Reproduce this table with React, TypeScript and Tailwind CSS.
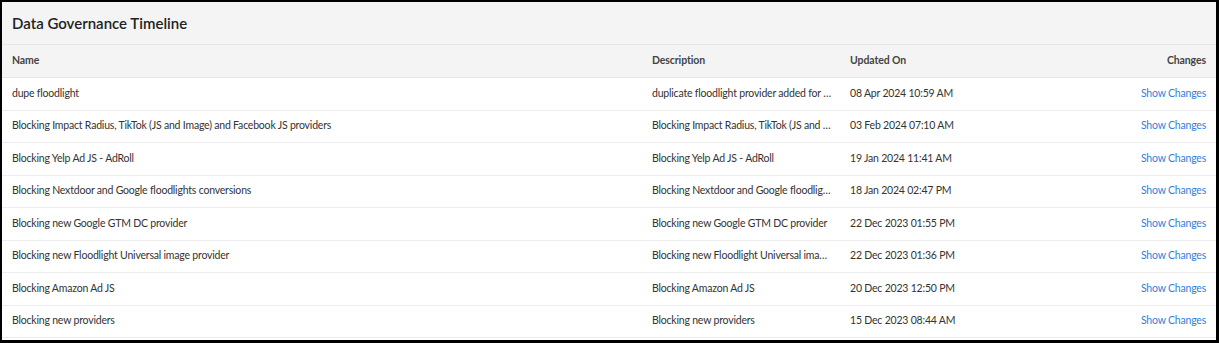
import React from "react";

const rows = [
  ["dupe floodlight", "duplicate floodlight provider added for testing purposes only", "08 Apr 2024 10:59 AM"],
  ["Blocking Impact Radius, TikTok (JS and Image) and Facebook JS providers", "Blocking Impact Radius, TikTok (JS and Image) and Facebook JS providers", "03 Feb 2024 07:10 AM"],
  ["Blocking Yelp Ad JS - AdRoll", "Blocking Yelp Ad JS - AdRoll", "19 Jan 2024 11:41 AM"],
  ["Blocking Nextdoor and Google floodlights conversions", "Blocking Nextdoor and Google floodlights conversions", "18 Jan 2024 02:47 PM"],
  ["Blocking new Google GTM DC provider", "Blocking new Google GTM DC provider", "22 Dec 2023 01:55 PM"],
  ["Blocking new Floodlight Universal image provider", "Blocking new Floodlight Universal image provider", "22 Dec 2023 01:36 PM"],
  ["Blocking Amazon Ad JS", "Blocking Amazon Ad JS", "20 Dec 2023 12:50 PM"],
  ["Blocking new providers", "Blocking new providers", "15 Dec 2023 08:44 AM"],
];

export default function App() {
  return (
    <div
      className="w-[1219px] h-[343px] bg-white border-l-2 border-t-2 border-r-[3px] border-b-[3px] border-black overflow-hidden text-[#333]"
      style={{ fontFamily: 'Lato, "Noto Sans", sans-serif' }}
    >
      <div className="h-[43px] bg-[#f4f4f4] border-b border-[#e6e6e6] flex items-center pl-[10px]">
        <h1 className="text-[15px] font-semibold text-[#222]">Data Governance Timeline</h1>
      </div>
      <div className="grid grid-cols-[640px_198px_1fr_160px] h-[33px] items-center bg-[#f4f4f4] border-b border-[#e6e6e6] text-[10.5px] font-bold tracking-[-0.1px] text-[#444]">
        <div className="pl-[10px]">Name</div>
        <div className="pl-[10px]">Description</div>
        <div className="pl-[10px]">Updated On</div>
        <div className="pr-[10px] text-right">Changes</div>
      </div>
      {rows.map(([name, desc, date], i) => (
        <div
          key={i}
          className="grid grid-cols-[640px_198px_1fr_160px] h-[32.5px] items-center border-b border-[#ececec] text-[10.5px] tracking-[-0.2px] text-[#333]"
        >
          <div className="pl-[10px] truncate">{name}</div>
          <div className="pl-[10px] pr-[8px] truncate">{desc}</div>
          <div className="pl-[10px]">{date}</div>
          <div className="pr-[10px] text-right text-[#2f7fe0]">Show Changes</div>
        </div>
      ))}
    </div>
  );
}
